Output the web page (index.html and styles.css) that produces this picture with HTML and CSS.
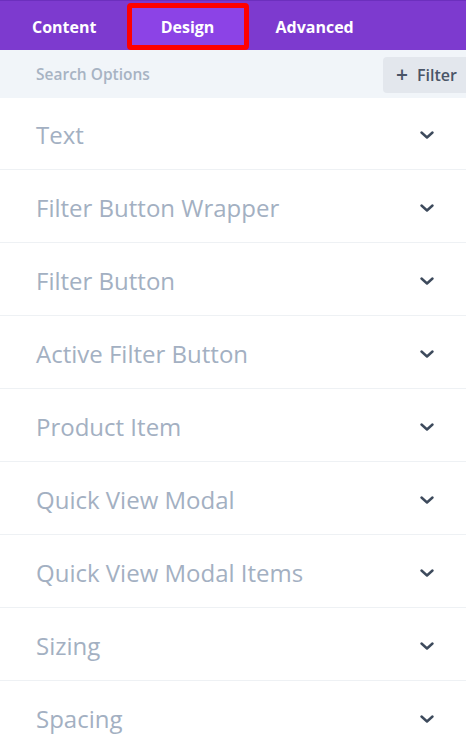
FILE: index.html
```html
<!DOCTYPE html>
<html>
<head>
<meta charset="utf-8">
<link rel="stylesheet" href="styles.css">
</head>
<body>
<div class="panel">
  <nav class="tabs">
    <div class="tab">Content</div>
    <div class="tab active">Design</div>
    <div class="tab">Advanced</div>
  </nav>
  <div class="search">
    <span class="placeholder">Search Options</span>
    <button class="filter"><span class="plus">+</span>Filter</button>
  </div>
  <ul class="groups">
    <li class="group"><span>Text</span><svg class="chev" viewBox="0 0 14 8"><path d="M1.5 1.5 L7 6.5 L12.5 1.5"/></svg></li>
    <li class="group"><span>Filter Button Wrapper</span><svg class="chev" viewBox="0 0 14 8"><path d="M1.5 1.5 L7 6.5 L12.5 1.5"/></svg></li>
    <li class="group"><span>Filter Button</span><svg class="chev" viewBox="0 0 14 8"><path d="M1.5 1.5 L7 6.5 L12.5 1.5"/></svg></li>
    <li class="group"><span>Active Filter Button</span><svg class="chev" viewBox="0 0 14 8"><path d="M1.5 1.5 L7 6.5 L12.5 1.5"/></svg></li>
    <li class="group"><span>Product Item</span><svg class="chev" viewBox="0 0 14 8"><path d="M1.5 1.5 L7 6.5 L12.5 1.5"/></svg></li>
    <li class="group"><span>Quick View Modal</span><svg class="chev" viewBox="0 0 14 8"><path d="M1.5 1.5 L7 6.5 L12.5 1.5"/></svg></li>
    <li class="group"><span>Quick View Modal Items</span><svg class="chev" viewBox="0 0 14 8"><path d="M1.5 1.5 L7 6.5 L12.5 1.5"/></svg></li>
    <li class="group"><span>Sizing</span><svg class="chev" viewBox="0 0 14 8"><path d="M1.5 1.5 L7 6.5 L12.5 1.5"/></svg></li>
    <li class="group"><span>Spacing</span><svg class="chev" viewBox="0 0 14 8"><path d="M1.5 1.5 L7 6.5 L12.5 1.5"/></svg></li>
  </ul>
</div>
</body>
</html>
```
FILE: styles.css
```css
html, body {
  margin: 0;
  padding: 0;
  background: #ffffff;
  font-family: "Open Sans", "Noto Sans", sans-serif;
  overflow: hidden;
}
.panel {
  width: 466px;
}
.tabs {
  height: 50px;
  background: #7d3acf;
  display: flex;
  align-items: stretch;
  padding-left: 32px;
  box-sizing: border-box;
  border-top: 1px solid #6c2fbd;
}
.tab {
  color: #ffffff;
  font-weight: 700;
  font-size: 16px;
  display: flex;
  align-items: center;
  justify-content: center;
  margin-top: 2px;
}
.tab.active {
  width: 122px;
  box-sizing: border-box;
  background: #8c43e6;
  border: 5px solid #ff0000;
  border-radius: 4px;
  margin-left: 31px;
  margin-right: 26px;
  padding-right: 2px;
}
.search {
  height: 48px;
  background: #f1f5f9;
  display: flex;
  align-items: center;
  justify-content: space-between;
  padding-left: 36px;
}
.placeholder {
  color: #a7b3c3;
  font-size: 15.5px;
  font-weight: 600;
}
.filter {
  height: 36px;
  width: 83px;
  margin-top: 2px;
  border: none;
  background: #e3e7ed;
  border-radius: 4px 0 0 4px;
  color: #4a5567;
  font-family: "Open Sans", "Noto Sans", sans-serif;
  font-size: 16px;
  font-weight: 600;
  display: flex;
  align-items: center;
  padding: 0 0 0 13px;
}
.plus {
  font-size: 21px;
  font-weight: 600;
  margin-right: 9px;
  margin-top: -2px;
}
.groups {
  list-style: none;
  margin: 0;
  padding: 0;
}
.group {
  height: 73px;
  box-sizing: border-box;
  border-bottom: 1px solid #eef1f4;
  display: flex;
  align-items: center;
  justify-content: space-between;
  padding: 0 32px 0 36px;
  color: #a3b0c2;
  font-size: 24px;
}
.group > span {
  margin-top: 2px;
}
.group:first-child {
  height: 72px;
}
.chev {
  width: 14px;
  height: 8px;
  fill: none;
  stroke: #3d4a5c;
  stroke-width: 2.4;
  stroke-linecap: round;
  stroke-linejoin: round;
  margin-top: 3px;
}
```
